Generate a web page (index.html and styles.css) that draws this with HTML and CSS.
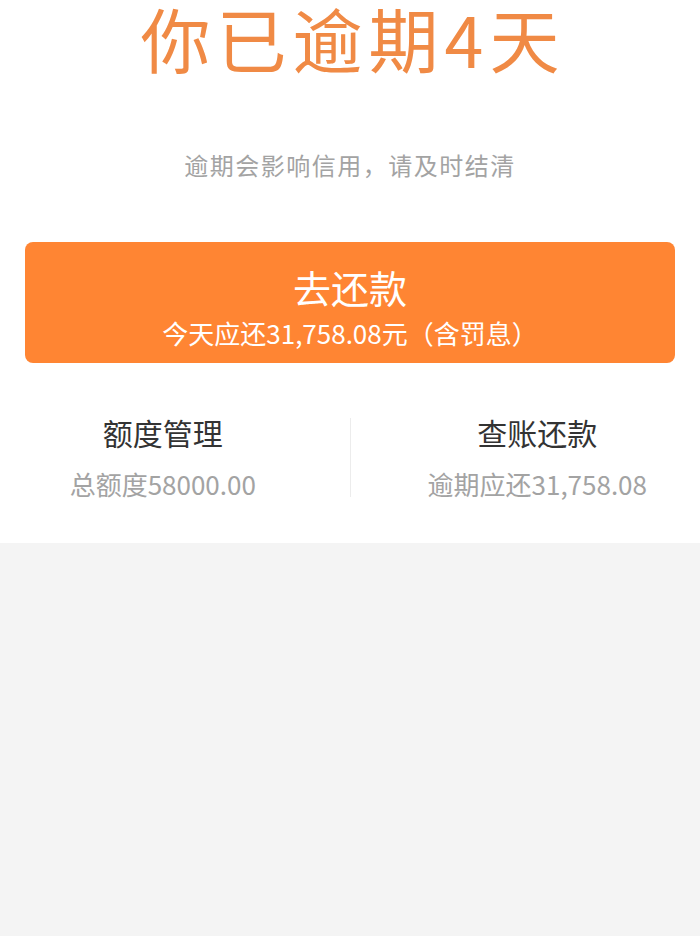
FILE: index.html
```html
<!DOCTYPE html>
<html lang="zh-CN">
<head>
  <meta charset="UTF-8" />
  <title>逾期提醒</title>
  <meta name="viewport" content="width=device-width, initial-scale=1.0" />
  <link rel="stylesheet" href="styles.css">
</head>
<body>

<div id="overdue-card">
  <div class="overdue-title">你已逾期4天</div>
  <div class="overdue-tip">逾期会影响信用，请及时结清</div>

  <div class="repay-btn">
    <div class="repay-main">去还款</div>
    <div class="repay-sub">今天应还31,758.08元（含罚息）</div>
  </div>

  <div class="entry-row">
    <div class="entry">
      <div class="entry-name">额度管理</div>
      <div class="entry-desc">总额度58000.00</div>
    </div>
    <div class="entry-divider"></div>
    <div class="entry">
      <div class="entry-name">查账还款</div>
      <div class="entry-desc">逾期应还31,758.08</div>
    </div>
  </div>
</div>

</body>
</html>
```

FILE: styles.css
```css
html, body {
  margin: 0; padding: 0; height: 100%;
  font-family: "Noto Sans CJK SC", "Noto Sans", sans-serif;
  background: #f4f4f4;
}

#overdue-card {
  background: #fff;
  padding: 0 25px;
  height: 543px;
  box-sizing: border-box;
}

.overdue-title {
  text-align: center;
  color: #f08a45;
  font-size: 70px;
  line-height: 76px;
  letter-spacing: 6px;
  padding-left: 6px;
}

.overdue-tip {
  text-align: center;
  color: #a3a3a3;
  font-size: 24px;
  line-height: 34px;
  margin-top: 72px;
  letter-spacing: 1.5px;
}

.repay-btn {
  margin-top: 60px;
  height: 121px;
  background: #ff8533;
  border-radius: 8px;
  color: #fff;
  text-align: center;
  box-sizing: border-box;
  padding-top: 22px;
}

.repay-main {
  font-size: 38px;
  line-height: 46px;
}

.repay-sub {
  font-size: 26px;
  line-height: 32px;
  margin-top: 7px;
}

.entry-row {
  display: grid;
  grid-template-columns: 1fr 1px 1fr;
  column-gap: 24px;
  margin: 0 -25px;
  padding-top: 49px;
}

.entry {
  text-align: center;
}

.entry-name {
  font-size: 30px;
  line-height: 40px;
  color: #333;
}

.entry-desc {
  font-size: 26px;
  line-height: 34px;
  color: #a3a3a3;
  margin-top: 15px;
}

.entry-divider {
  background: #ececec;
  height: 79px;
  margin-top: 6px;
}
```
